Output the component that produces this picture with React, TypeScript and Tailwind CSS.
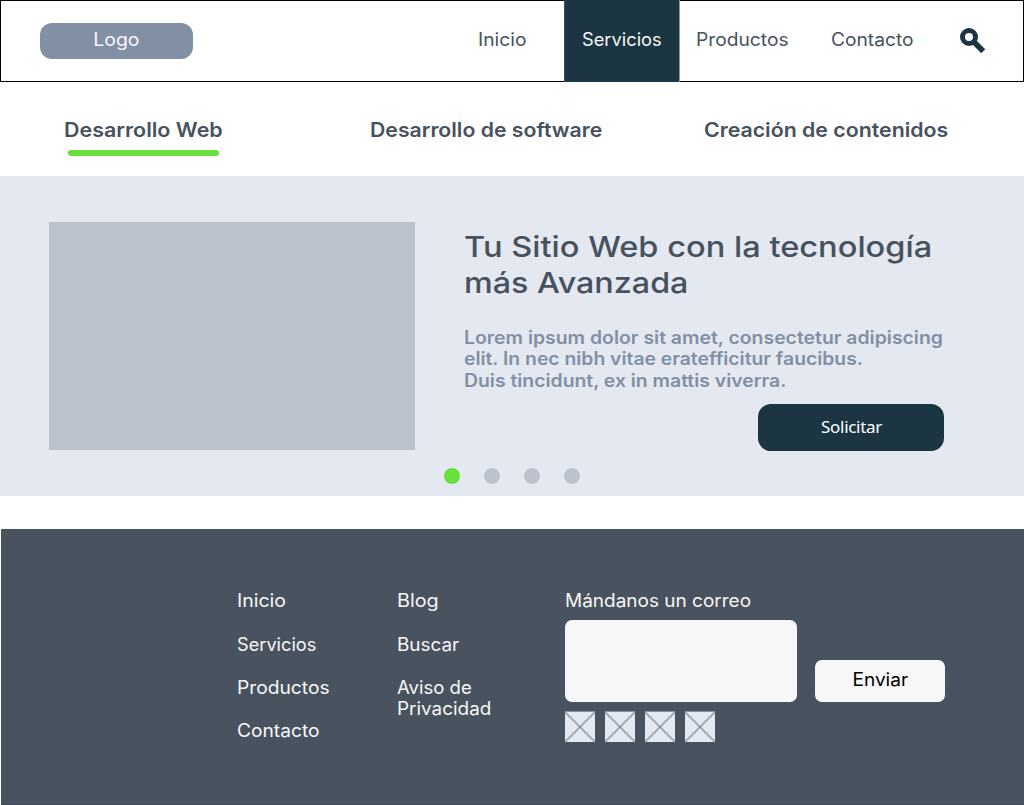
const socialLinks = ["Red social 1", "Red social 2", "Red social 3", "Red social 4"];

function SearchIcon() {
  return (
    <svg width="26" height="26" viewBox="0 0 26 26" fill="none" stroke="#1c3543" strokeWidth="5">
      <circle cx="9" cy="9" r="6.5" />
      <path d="M13.5 13.5L23.2 23.2" strokeWidth="5.6" />
    </svg>
  );
}

function Placeholder({ label }: { label: string }) {
  return (
    <a href="#" aria-label={label} className="block h-[30px] w-[30px] bg-[#e4e8f1]">
      <svg width="30" height="30" viewBox="0 0 30 30" className="overflow-visible" fill="none" stroke="#5f7684" strokeOpacity="0.5" strokeWidth="2">
        <path d="M0 0L30 30" />
        <path d="M30 0L0 30" />
        <path d="M0 -0.5H30" stroke="#8b94a2" strokeOpacity="1" strokeWidth="1" />
      </svg>
    </a>
  );
}

function Header() {
  return (
    <header className="flex h-[82px] shrink-0 border border-black pl-[39px] text-[#47525e]">
      <div className="mt-[22px] flex h-9 w-[153px] items-center justify-center rounded-[12px] bg-[#8190a5] pb-[3px] text-[#f7f7f7]">
        <span className="inline-block scale-x-[1.08]">Logo</span>
      </div>
      <nav className="-my-px ml-[284px] flex whitespace-nowrap">
        <a href="#" className="flex w-[87px] items-center pb-[3px] pl-[0.75px]">
          <span className="inline-block origin-left scale-x-[1.07]">Inicio</span>
        </a>
        <a href="#" className="flex w-[116px] items-center border-l border-r border-l-[#3a505c] border-r-[#8e9aa2] bg-[#1c3543] pb-[3px] pl-[17px] text-[#f7f7f7]">
          <span className="inline-block origin-left scale-x-[1.015]">Servicios</span>
        </a>
        <a href="#" className="flex w-[150px] items-center pb-[3px] pl-[15.5px]">
          <span className="inline-block origin-left scale-x-[1.067]">Productos</span>
        </a>
        <a href="#" className="flex w-[130px] items-center pb-[3px] pl-[0.75px]">
          <span className="inline-block origin-left scale-x-[1.065]">Contacto</span>
        </a>
        <button aria-label="Buscar" className="mt-7 h-[26px] w-[26px]">
          <SearchIcon />
        </button>
      </nav>
    </header>
  );
}

function ServiceTabs() {
  return (
    <nav className="flex h-[94px] shrink-0 whitespace-nowrap pl-[63px] pt-9 text-[20px] font-semibold leading-6 text-[#47525e]">
      <a href="#" className="w-[306px] pl-[0.75px]">
        <span className="block origin-left scale-x-[1.073]">Desarrollo Web</span>
        <span className="ml-[4px] mt-2 block h-1.5 w-[151px] rounded-full bg-[#6ade3c]" />
      </a>
      <a href="#" className="w-[334.5px] pl-px">
        <span className="block origin-left scale-x-[1.062]">Desarrollo de software</span>
      </a>
      <a href="#" className="pl-[0.5px]">
        <span className="block origin-left scale-x-[1.065]">Creación de contenidos</span>
      </a>
    </nav>
  );
}

function Carousel() {
  return (
    <section className="h-80 shrink-0 bg-[#e4e8f1] pt-[46px]">
      <div className="flex h-[229px] pl-[49px]">
        <div className="h-[228px] w-[366px] bg-[#bcc2cd]" />
        <div className="ml-[49px] flex w-[480px] flex-col whitespace-nowrap pt-[7px]">
          <h1 className="text-[29px] font-medium leading-9 text-[#47525e]">
            <span className="-ml-[0.5px] block origin-left scale-x-[1.124]">Tu Sitio Web con la tecnología</span>
            <span className="-ml-[0.25px] block origin-left scale-x-[1.113]">más Avanzada</span>
          </h1>
          <p className="mt-[26px] text-[18px] font-semibold leading-[21.4px] text-[#8190a5]">
            <span className="block origin-left scale-x-[1.078]">Lorem ipsum dolor sit amet, consectetur adipiscing</span>
            <span className="ml-[0.25px] block origin-left scale-x-[1.074]">elit. In nec nibh vitae eratefficitur faucibus.</span>
            <span className="block origin-left scale-x-[1.076]">Duis tincidunt, ex in mattis viverra.</span>
          </p>
          <button className="mt-auto h-[47px] w-[186px] self-end rounded-[13px] bg-[#1c3543] pb-px pl-px font-['Noto_Sans'] text-[17px] tracking-[-0.3px] text-white">
            Solicitar
          </button>
        </div>
      </div>
      <div className="mt-[17px] flex justify-center gap-6">
        <span className="h-4 w-4 rounded-full bg-[#6ade3c]" />
        <span className="h-4 w-4 rounded-full bg-[#bcc2cd]" />
        <span className="h-4 w-4 rounded-full bg-[#bcc2cd]" />
        <span className="h-4 w-4 rounded-full bg-[#bcc2cd]" />
      </div>
    </section>
  );
}

function Footer() {
  return (
    <footer className="ml-px mt-[33px] flex h-[276px] shrink-0 whitespace-nowrap border-b border-[#414b57] bg-[#49535f] pl-[235.5px] pt-[61px] leading-[21px] text-[#f7f7f7]">
      <div className="flex w-40 flex-col">
        <a href="#" className="origin-left scale-x-[1.08]">Inicio</a>
        <a href="#" className="mt-[23px] origin-left scale-x-[1.01]">Servicios</a>
        <a href="#" className="mt-[22px] origin-left scale-x-[1.067]">Productos</a>
        <a href="#" className="mt-[22px] origin-left scale-x-[1.065]">Contacto</a>
      </div>
      <div className="flex w-[168px] flex-col">
        <a href="#" className="origin-left scale-x-[1.1]">Blog</a>
        <a href="#" className="mt-[23px] origin-left scale-x-[1.05]">Buscar</a>
        <a href="#" className="mt-[22px]">
          <span className="block origin-left scale-x-[1.03]">Aviso de</span>
          <span className="block origin-left scale-x-[1.05]">Privacidad</span>
        </a>
      </div>
      <form className="flex flex-col">
        <label htmlFor="correo" className="origin-left scale-x-[1.055]">Mándanos un correo</label>
        <div className="ml-[0.5px] mt-[9px] flex items-end gap-[18px]">
          <textarea id="correo" className="block h-[82px] w-[232px] resize-none rounded-[7px] bg-[#f7f7f7]" />
          <button type="button" className="h-[42px] w-[130px] rounded-[7px] bg-[#f7f7f7] pb-[3px] text-black">
            <span className="inline-block scale-x-[1.06]">Enviar</span>
          </button>
        </div>
        <div className="ml-[0.5px] mt-2.5 flex gap-2.5">
          {socialLinks.map((label) => (
            <Placeholder key={label} label={label} />
          ))}
        </div>
      </form>
    </footer>
  );
}

export default function App() {
  return (
    <div className="flex h-[805px] w-[1024px] flex-col overflow-hidden bg-white font-['Inter',sans-serif] text-[18px] leading-6">
      <Header />
      <ServiceTabs />
      <Carousel />
      <Footer />
    </div>
  );
}
